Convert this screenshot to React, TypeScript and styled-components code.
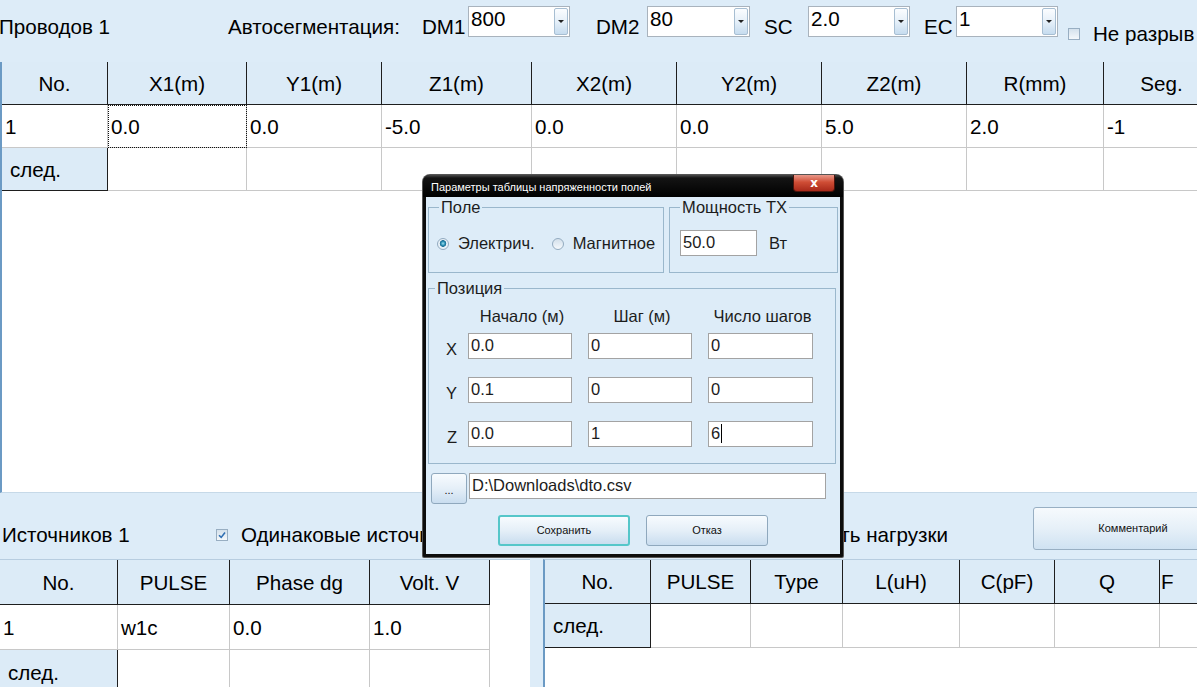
import React from "react";
import styled, { createGlobalStyle, css } from "styled-components";

const GlobalStyle = createGlobalStyle`
  html, body {
    margin: 0;
    padding: 0;
  }
  body {
    font-family: "Liberation Sans", Arial, sans-serif;
    background: #ddecf8;
    overflow: hidden;
  }
`;

const Screen = styled.div`
  position: relative;
  width: 1197px;
  height: 687px;
  overflow: hidden;
  background: #ddecf8;
  color: #000;
  font-size: 20.6px;
  line-height: 23px;
`;

/* ---------- top toolbar ---------- */

const TopBar = styled.div`
  display: flex;
  align-items: flex-start;
  height: 62px;
  white-space: nowrap;
`;

const Slot = styled.div<{ $w: number; $top?: number; $pl?: number }>`
  flex: none;
  box-sizing: border-box;
  width: ${(p) => p.$w}px;
  padding-top: ${(p) => p.$top ?? 15}px;
  padding-left: ${(p) => p.$pl ?? 0}px;
`;

const Combo = styled.div<{ $w: number }>`
  flex: none;
  box-sizing: border-box;
  display: flex;
  justify-content: space-between;
  width: ${(p) => p.$w}px;
  height: 31px;
  margin-top: 6px;
  padding: 0 1px 0 2px;
  background: #fff;
  border: 1px solid #a9b3bd;
`;

const ComboArrow = styled.div`
  align-self: center;
  display: flex;
  align-items: center;
  justify-content: center;
  width: 12px;
  height: 25px;
  border: 1px solid #a7bed2;
  border-radius: 2px;
  background: linear-gradient(#fbfdff, #e6f0f9 50%, #c6dcef);

  &::after {
    content: "";
    border-left: 3px solid transparent;
    border-right: 3px solid transparent;
    border-top: 3px solid #222;
  }
`;

const Box = styled.div`
  flex: none;
  box-sizing: border-box;
  width: 12px;
  height: 12px;
  display: flex;
  align-items: center;
  justify-content: center;
  border: 1px solid #98aec2;
  background: linear-gradient(#d4e1ec, #f4f8fb);
`;

/* ---------- tables ---------- */

const WireArea = styled.div`
  box-sizing: border-box;
  height: 431px;
  background: #fff;
  border-left: 2px solid #6b9ac4;
  border-bottom: 1px solid #c6d9e8;
  overflow: hidden;
`;

const Grid = styled.div<{ $cols: string; $row: number }>`
  display: grid;
  grid-template-columns: ${(p) => p.$cols};
  grid-auto-rows: ${(p) => p.$row}px;
  white-space: nowrap;
`;

const HeadCell = styled.div<{ $pad?: number }>`
  box-sizing: border-box;
  display: flex;
  align-items: center;
  justify-content: ${(p) => (p.$pad !== undefined ? "flex-start" : "center")};
  padding-left: ${(p) => p.$pad ?? 0}px;
  background: #dcebf7;
  border-right: 1px solid #1e1e1e;
  border-bottom: 1px solid #1e1e1e;
  overflow: hidden;
`;

const Cell = styled.div<{ $focus?: boolean }>`
  box-sizing: border-box;
  display: flex;
  align-items: center;
  padding-left: 3px;
  background: #fff;
  border-right: 1px solid #c8c8c8;
  border-bottom: 1px solid #c8c8c8;
  overflow: hidden;
  ${(p) =>
    p.$focus &&
    css`
      outline: 1px dotted #111;
      outline-offset: -1px;
    `}
`;

/* ---------- sources / loads bar ---------- */

const SourceBar = styled.div`
  display: flex;
  align-items: flex-start;
  height: 66px;
  white-space: nowrap;
`;

const CheckLabel = styled.div<{ $w: number; $pl: number; $top: number }>`
  flex: none;
  box-sizing: border-box;
  display: flex;
  align-items: center;
  gap: 13px;
  width: ${(p) => p.$w}px;
  padding-left: ${(p) => p.$pl}px;
  margin-top: ${(p) => p.$top}px;
`;

const RightLabel = styled.div<{ $w: number; $pr: number }>`
  flex: none;
  box-sizing: border-box;
  width: ${(p) => p.$w}px;
  padding-right: ${(p) => p.$pr}px;
  margin-top: 30px;
  text-align: right;
`;

const WideButton = styled.div`
  flex: none;
  box-sizing: border-box;
  width: 200px;
  height: 43px;
  margin-top: 14px;
  display: flex;
  align-items: center;
  justify-content: center;
  font-size: 11px;
  color: #111;
  border: 1px solid #98afc3;
  border-radius: 3px;
  background: linear-gradient(#f6fafd, #e6f0f8 50%, #cfe2f2);
`;

const BottomArea = styled.div`
  display: flex;
  gap: 13px;
  height: 128px;
`;

const Pane = styled.div<{ $w?: number; $edge?: boolean }>`
  box-sizing: border-box;
  flex: ${(p) => (p.$w ? "none" : "1")};
  width: ${(p) => (p.$w ? `${p.$w}px` : "auto")};
  background: #fff;
  border-top: 1px solid #b7cde0;
  border-left: ${(p) => (p.$edge ? "2px solid #6b9ac4" : "none")};
  overflow: hidden;
`;

/* ---------- dialog ---------- */

const Dialog = styled.div`
  position: absolute;
  left: 423px;
  top: 175px;
  width: 420px;
  height: 382px;
  box-sizing: border-box;
  display: flex;
  flex-direction: column;
  background: #0c0c0c;
  border-radius: 7px 7px 1px 1px;
  box-shadow: 0 0 0 1px #555;
  font-size: 16.5px;
  line-height: 19px;
  color: #1c1c1c;
`;

const TitleBar = styled.div`
  flex: none;
  display: flex;
  justify-content: space-between;
  height: 22px;
  padding: 0 8px;
  border-radius: 7px 7px 0 0;
  background: linear-gradient(#4a4a4a, #141414 3px, #000);
`;

const Title = styled.div`
  font-size: 11px;
  line-height: 24px;
  color: #fff;
`;

const CloseBtn = styled.div`
  box-sizing: border-box;
  width: 42px;
  height: 17px;
  display: flex;
  align-items: center;
  justify-content: center;
  border: 1px solid #4d140c;
  border-top: none;
  border-radius: 0 0 4px 4px;
  background: linear-gradient(#e9988a, #cf4d35 45%, #a8291a);
  color: #fff;
  font-family: "DejaVu Sans", sans-serif;
  font-size: 12px;
  font-weight: bold;
`;

const DialogBody = styled.div`
  flex: 1;
  display: flex;
  flex-direction: column;
  margin: 0 3px 3px;
  padding: 1px 2px 0;
  background: #ddecf8;
`;

const GroupRow = styled.div`
  display: flex;
  gap: 5px;
`;

const Group = styled.fieldset<{ $w: number; $h: number; $lp: number; $mt?: number }>`
  box-sizing: border-box;
  width: ${(p) => p.$w}px;
  height: ${(p) => p.$h}px;
  min-width: 0;
  margin: ${(p) => p.$mt ?? 0}px 0 0;
  padding: 0 ${(p) => p.$lp}px;
  border: 1px solid #9ab7cc;
`;

const Legend = styled.legend`
  padding: 0 2px;
`;

const Line = styled.div<{ $mt: number; $gap: number }>`
  display: flex;
  align-items: center;
  gap: ${(p) => p.$gap}px;
  margin-top: ${(p) => p.$mt}px;
  white-space: nowrap;
`;

const Radio = styled.div<{ $on?: boolean }>`
  flex: none;
  box-sizing: border-box;
  width: 12px;
  height: 12px;
  border-radius: 50%;
  border: 1px solid #93abc0;
  background: ${(p) =>
    p.$on
      ? "radial-gradient(circle at 50% 45%, #9fe0f0 0, #2a8fb3 2px, #1b6c92 3px, #e8f1f8 3.6px)"
      : "linear-gradient(#d3e0eb, #f5f9fc)"};
`;

const RadioText = styled.span<{ $mr?: number }>`
  margin-right: ${(p) => p.$mr ?? 0}px;
`;

const TextBox = styled.div<{ $w: number }>`
  flex: none;
  box-sizing: border-box;
  display: flex;
  align-items: center;
  width: ${(p) => p.$w}px;
  height: 26px;
  padding: 0 2px 2px;
  background: #fff;
  border: 1px solid #a3a3a3;
  white-space: nowrap;
`;

const Caret = styled.span`
  display: inline-block;
  width: 1px;
  height: 19px;
  margin-left: 1px;
  background: #000;
`;

const PosGrid = styled.div<{ $mt: number }>`
  display: grid;
  grid-template-columns: 23px 104px 104px 105px;
  grid-auto-rows: 26px;
  column-gap: 16px;
  row-gap: 18px;
  align-items: center;
  margin: ${(p) => p.$mt}px 0 0 -6px;
`;

const ColHeads = styled(PosGrid)`
  grid-auto-rows: 18px;
`;

const ColHead = styled.div`
  text-align: center;
  white-space: nowrap;
  padding-left: 4px;
`;

const RowHead = styled.div`
  justify-self: end;
  margin-right: -5px;
  padding-top: 6px;
`;

const PathRow = styled.div`
  display: flex;
  align-items: flex-start;
  gap: 2px;
  margin: 9px 0 0 3px;
`;

const PushButton = styled.div<{ $w: number; $focus?: boolean; $dots?: boolean }>`
  flex: none;
  box-sizing: border-box;
  width: ${(p) => p.$w}px;
  height: 31px;
  display: flex;
  align-items: ${(p) => (p.$dots ? "flex-end" : "center")};
  justify-content: center;
  padding-bottom: ${(p) => (p.$dots ? "6px" : "0")};
  font-size: 11px;
  line-height: 13px;
  color: #111;
  border: ${(p) => (p.$focus ? "2px solid #55c6c9" : "1px solid #8fa8bd")};
  border-radius: 3px;
  background: linear-gradient(#f7fbfe, #e5eff8 50%, #c9ddef);
`;

const ButtonRow = styled.div`
  display: flex;
  justify-content: center;
  gap: 16px;
  margin-top: 11px;
`;

/* ---------- data ---------- */

const wireCols = "106px 139px 135px 150px 145px 145px 145px 137px 116px";
const wireHead = ["No.", "X1(m)", "Y1(m)", "Z1(m)", "X2(m)", "Y2(m)", "Z2(m)", "R(mm)", "Seg."];
const wireRow = ["0.0", "0.0", "-5.0", "0.0", "0.0", "5.0", "2.0", "-1"];

const srcCols = "118px 112px 140px 120px";
const srcHead = ["No.", "PULSE", "Phase dg", "Volt. V"];
const srcRow = ["1", "w1c", "0.0", "1.0"];

const loadCols = "106px 100px 92px 117px 95px 105px 40px";
const loadHead = ["No.", "PULSE", "Type", "L(uH)", "C(pF)", "Q"];

const positions = [
  { axis: "X", start: "0.0", step: "0", count: "0" },
  { axis: "Y", start: "0.1", step: "0", count: "0" },
  { axis: "Z", start: "0.0", step: "1", count: "6" },
];

const Check = () => (
  <svg width="8" height="8" viewBox="0 0 8 8">
    <path d="M1 4.2 L3.2 6.4 L7 1.4" fill="none" stroke="#2f6fb3" strokeWidth="1.6" />
  </svg>
);

const App: React.FC = () => {
  return (
    <Screen>
      <GlobalStyle />

      <TopBar>
        <Slot $w={229} style={{ marginLeft: -1 }}>
          Проводов 1
        </Slot>
        <Slot $w={194}>Автосегментация:</Slot>
        <Slot $w={46}>DM1</Slot>
        <Combo $w={102}>
          800
          <ComboArrow />
        </Combo>
        <Slot $w={77} $pl={26}>DM2</Slot>
        <Combo $w={103}>
          80
          <ComboArrow />
        </Combo>
        <Slot $w={58} $pl={14}>SC</Slot>
        <Combo $w={102}>
          2.0
          <ComboArrow />
        </Combo>
        <Slot $w={46} $pl={14}>EC</Slot>
        <Combo $w={102}>
          1
          <ComboArrow />
        </Combo>
        <CheckLabel $w={138} $pl={10} $top={22}>
          <Box />
          Не разрыв
        </CheckLabel>
      </TopBar>

      <WireArea>
        <Grid $cols={wireCols} $row={43}>
          {wireHead.map((h) => (
            <HeadCell key={h}>{h}</HeadCell>
          ))}
          <Cell>1</Cell>
          {wireRow.map((v, i) => (
            <Cell key={i} $focus={i === 0}>
              {v}
            </Cell>
          ))}
          <HeadCell $pad={8}>след.</HeadCell>
          {wireRow.map((_, i) => (
            <Cell key={`e${i}`} />
          ))}
        </Grid>
      </WireArea>

      <SourceBar>
        <Slot $w={216} $top={30} $pl={2}>
          Источников 1
        </Slot>
        <CheckLabel $w={327} $pl={0} $top={30}>
          <Box>
            <Check />
          </Box>
          Одинаковые источники
        </CheckLabel>
        <RightLabel $w={490} $pr={85}>Учесть нагрузки</RightLabel>
        <WideButton>Комментарий</WideButton>
      </SourceBar>

      <BottomArea>
        <Pane $w={530}>
          <Grid $cols={srcCols} $row={45}>
            {srcHead.map((h) => (
              <HeadCell key={h}>{h}</HeadCell>
            ))}
            {srcRow.map((v, i) => (
              <Cell key={i}>{v}</Cell>
            ))}
            <HeadCell $pad={8}>след.</HeadCell>
            <Cell />
            <Cell />
            <Cell />
          </Grid>
        </Pane>
        <Pane $edge>
          <Grid $cols={loadCols} $row={44}>
            {loadHead.map((h) => (
              <HeadCell key={h}>{h}</HeadCell>
            ))}
            <HeadCell $pad={1}>F</HeadCell>
            <HeadCell $pad={8}>след.</HeadCell>
            {loadHead.map((h) => (
              <Cell key={h} />
            ))}
          </Grid>
        </Pane>
      </BottomArea>

      <Dialog>
        <TitleBar>
          <Title>Параметры таблицы напряженности полей</Title>
          <CloseBtn>x</CloseBtn>
        </TitleBar>
        <DialogBody>
          <GroupRow>
            <Group $w={236} $h={75} $lp={10}>
              <Legend>Поле</Legend>
              <Line $mt={17} $gap={9} style={{ marginLeft: -2 }}>
                <Radio $on />
                <RadioText $mr={8}>Электрич.</RadioText>
                <Radio />
                <RadioText>Магнитное</RadioText>
              </Line>
            </Group>
            <Group $w={169} $h={75} $lp={10}>
              <Legend>Мощность TX</Legend>
              <Line $mt={13} $gap={12}>
                <TextBox $w={77}>50.0</TextBox>
                Вт
              </Line>
            </Group>
          </GroupRow>
          <Group $w={408} $h={185} $lp={6} $mt={6}>
            <Legend>Позиция</Legend>
            <ColHeads $mt={9}>
              <span />
              <ColHead>Начало (м)</ColHead>
              <ColHead>Шаг (м)</ColHead>
              <ColHead>Число шагов</ColHead>
            </ColHeads>
            <PosGrid $mt={8}>
              {positions.map((p) => (
                <React.Fragment key={p.axis}>
                  <RowHead>{p.axis}</RowHead>
                  <TextBox $w={104}>{p.start}</TextBox>
                  <TextBox $w={104}>{p.step}</TextBox>
                  <TextBox $w={105}>
                    {p.count}
                    {p.axis === "Z" && <Caret />}
                  </TextBox>
                </React.Fragment>
              ))}
            </PosGrid>
          </Group>
          <PathRow>
            <PushButton $w={36} $dots>
              ...
            </PushButton>
            <TextBox $w={357}>D:\Downloads\dto.csv</TextBox>
          </PathRow>
          <ButtonRow>
            <PushButton $w={132} $focus>
              Сохранить
            </PushButton>
            <PushButton $w={122}>Отказ</PushButton>
          </ButtonRow>
        </DialogBody>
      </Dialog>
    </Screen>
  );
};

export default App;
